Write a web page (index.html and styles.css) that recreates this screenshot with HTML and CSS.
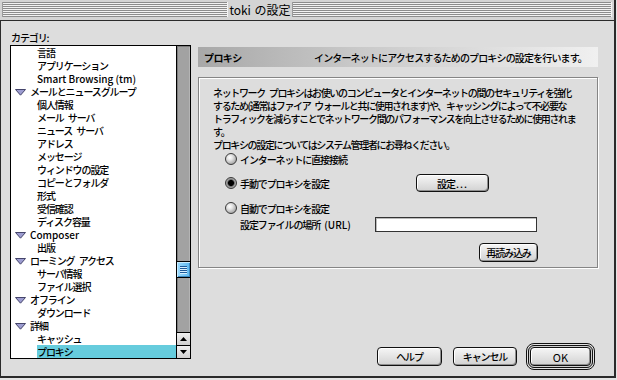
FILE: index.html
```html
<!DOCTYPE html>
<html lang="ja">
<head>
<meta charset="utf-8">
<title>toki の設定</title>
<link rel="stylesheet" href="styles.css">
</head>
<body>
<div class="window">
  <div class="titlebar">
    <div class="stripes stripes-left"></div>
    <div class="title">toki の設定</div>
    <div class="stripes stripes-right"></div>
  </div>
  <div class="content">
    <div class="left">
      <div class="cat-label">カテゴリ:</div>
      <div class="listbox">
        <ul class="list">
          <li class="child">言語</li>
          <li class="child">アプリケーション</li>
          <li class="child lat">Smart Browsing (tm)</li>
          <li class="parent"><svg class="tri" width="11" height="7" viewBox="0 0 11 7"><polygon points="0.5,0.5 10.5,0.5 5.5,6.2" fill="#9c9cd0" stroke="#44446a" stroke-width="1"/></svg>メールとニュースグループ</li>
          <li class="child">個人情報</li>
          <li class="child">メール サーバ</li>
          <li class="child">ニュース サーバ</li>
          <li class="child">アドレス</li>
          <li class="child">メッセージ</li>
          <li class="child">ウィンドウの設定</li>
          <li class="child">コピーとフォルダ</li>
          <li class="child">形式</li>
          <li class="child">受信確認</li>
          <li class="child">ディスク容量</li>
          <li class="parent lat"><svg class="tri" width="11" height="7" viewBox="0 0 11 7"><polygon points="0.5,0.5 10.5,0.5 5.5,6.2" fill="#9c9cd0" stroke="#44446a" stroke-width="1"/></svg>Composer</li>
          <li class="child">出版</li>
          <li class="parent"><svg class="tri" width="11" height="7" viewBox="0 0 11 7"><polygon points="0.5,0.5 10.5,0.5 5.5,6.2" fill="#9c9cd0" stroke="#44446a" stroke-width="1"/></svg>ローミング アクセス</li>
          <li class="child">サーバ情報</li>
          <li class="child">ファイル選択</li>
          <li class="parent"><svg class="tri" width="11" height="7" viewBox="0 0 11 7"><polygon points="0.5,0.5 10.5,0.5 5.5,6.2" fill="#9c9cd0" stroke="#44446a" stroke-width="1"/></svg>オフライン</li>
          <li class="child">ダウンロード</li>
          <li class="parent"><svg class="tri" width="11" height="7" viewBox="0 0 11 7"><polygon points="0.5,0.5 10.5,0.5 5.5,6.2" fill="#9c9cd0" stroke="#44446a" stroke-width="1"/></svg>詳細</li>
          <li class="child">キャッシュ</li>
          <li class="child selected">プロキシ</li>
        </ul>
        <div class="scrollbar">
          <div class="track"><div class="thumb"><div class="grip"></div></div></div>
          <div class="arrow"><svg width="7" height="4" viewBox="0 0 7 4"><polygon points="3.5,0 7,4 0,4" fill="#000"/></svg></div>
          <div class="arrow"><svg width="7" height="4" viewBox="0 0 7 4"><polygon points="0,0 7,0 3.5,4" fill="#000"/></svg></div>
        </div>
      </div>
    </div>
    <div class="right">
      <div class="panel-head">
        <span class="ph-title">プロキシ</span>
        <span class="ph-desc">インターネットにアクセスするためのプロキシの設定を行います。</span>
      </div>
      <div class="group">
        <p class="desc">ネットワーク プロキシはお使いのコンピュータとインターネットの間のセキュリティを強化<br>するため(通常はファイア ウォールと共に使用されます)や、キャッシングによって不必要な<br>トラフィックを減らすことでネットワーク間のパフォーマンスを向上させるために使用されま<br>す。<br>プロキシの設定についてはシステム管理者にお尋ねください。</p>
        <div class="opt opt1"><span class="radio"></span><span class="opt-label">インターネットに直接接続</span></div>
        <div class="opt opt2"><span class="radio checked"></span><span class="opt-label">手動でプロキシを設定</span><span class="btn btn-settings">設定<span class="lat dots">...</span></span></div>
        <div class="opt opt3"><span class="radio"></span><span class="opt-label">自動でプロキシを設定</span></div>
        <div class="url-row"><span class="url-label">設定ファイルの場所 <span class="lat">(URL)</span></span><span class="field"></span></div>
        <div class="reload-row"><span class="btn btn-reload">再読み込み</span></div>
      </div>
      <div class="buttons">
        <span class="btn btn-help">ヘルプ</span>
        <span class="btn btn-cancel">キャンセル</span>
        <span class="ring"><span class="ring-in"><span class="btn btn-ok lat">OK</span></span></span>
      </div>
    </div>
  </div>
</div>
</body>
</html>
```

FILE: styles.css
```css
* { box-sizing: border-box; }

html, body {
  margin: 0;
  padding: 0;
}

body {
  width: 617px;
  height: 380px;
  overflow: hidden;
  background: #e4e4e4;
  font-family: "Noto Sans CJK JP", "Noto Sans", sans-serif;
  font-size: 10px;
  font-weight: 500;
  letter-spacing: -1.1px;
  word-spacing: 3px;
  color: #000;
}

.lat { letter-spacing: 0; word-spacing: normal; }

.dots { letter-spacing: 1px; margin-left: 1px; }

.window {
  width: 616px;
  height: 378px;
  display: flex;
  flex-direction: column;
  background: #d6d6d6;
  border-right: 2px solid #2a2a2a;
  border-bottom: 2px solid #2a2a2a;
}

/* title bar */
.titlebar {
  height: 20px;
  flex: none;
  display: flex;
  padding: 2px 2px 3px 2px;
  background: #d4d4d4;
}

.stripes {
  height: 15px;
  background: repeating-linear-gradient(to bottom, #8c8c8c 0 1px, #f2f2f2 1px 2px);
  border-left: 1px solid #9a9a9a;
  border-right: 1px solid #f4f4f4;
}

.stripes-left { width: 226px; }
.stripes-right { flex: 1; }

.title {
  width: 64px;
  height: 15px;
  text-align: center;
  font-size: 12px;
  font-weight: 400;
  line-height: 15px;
  letter-spacing: 0;
  word-spacing: 1px;
  white-space: nowrap;
}

/* content */
.content {
  flex: 1;
  display: flex;
  gap: 7px;
  padding: 10px 16px 7px 9px;
  background: #dddddd;
  border-top: 1px solid #2a2a2a;
  border-left: 1px solid #2a2a2a;
}

.left {
  width: 181px;
  flex: none;
  display: flex;
  flex-direction: column;
}

.cat-label {
  height: 14px;
  line-height: 14px;
  padding-left: 1px;
}

.listbox {
  height: 314px;
  display: flex;
  border: 1px solid #000;
  background: #fff;
}

.list {
  list-style: none;
  margin: 0;
  padding: 0;
  flex: 1;
}

.list li {
  height: 13px;
  line-height: 13px;
  white-space: nowrap;
  display: flex;
  align-items: center;
}

.list li.child { padding-left: 26px; }

.list li.parent { padding-left: 4px; }

.tri {
  flex: none;
  margin-right: 4px;
  margin-top: 1px;
}

.list li.selected {
  margin-left: 26px;
  padding-left: 0;
  background: #66ccdd;
}

.scrollbar {
  width: 14px;
  flex: none;
  display: flex;
  flex-direction: column;
  border-left: 1px solid #000;
}

.track {
  flex: 1;
  background: #a2a2a2;
  box-shadow: inset 1px 1px #7c7c7c, inset -1px 0 #b4b4b4;
}

.thumb {
  margin-top: 215px;
  height: 17px;
  border-top: 1px solid #000;
  border-bottom: 1px solid #000;
  background: linear-gradient(to right, #9fdcff, #5cb8f0);
  box-shadow: inset 1px 1px #c8ecff, inset -1px -1px #3a88c0;
  display: flex;
  align-items: center;
  justify-content: center;
}

.grip {
  width: 7px;
  height: 8px;
  background: repeating-linear-gradient(to bottom, #1d5a9a 0 1px, #d6f0ff 1px 2px);
}

.arrow {
  height: 13px;
  flex: none;
  border-top: 1px solid #000;
  background: linear-gradient(#f0f0f0, #cfcfcf);
  display: flex;
  align-items: center;
  justify-content: center;
}

/* right column */
.right {
  width: 400px;
  flex: none;
  display: flex;
  flex-direction: column;
  padding-top: 16px;
}

.panel-head {
  height: 20px;
  flex: none;
  display: flex;
  align-items: center;
  padding-left: 6px;
  white-space: nowrap;
  background: linear-gradient(to right, #a8a8a8 0%, #c9c9c9 40%, #f0f0f0 100%);
}

.ph-title {
  width: 110px;
  flex: none;
  font-weight: bold;
  letter-spacing: -0.6px;
}

.ph-desc { letter-spacing: -0.85px; }

.group {
  margin-top: 10px;
  height: 191px;
  border: 1px solid #858585;
  box-shadow: inset 1px 1px #ffffff, 1px 1px #ffffff;
  padding-top: 8px;
}

.desc {
  margin: 0;
  padding-left: 14px;
  line-height: 13px;
  letter-spacing: -1.35px;
  white-space: nowrap;
}

.opt {
  display: flex;
  align-items: center;
  padding-left: 26px;
}

.opt1 { height: 16px; }
.opt2 { height: 18px; margin-top: 7px; }
.opt3 { height: 16px; margin-top: 8px; }

.opt-label {
  margin-left: 3px;
  white-space: nowrap;
}

.opt2 .opt-label { width: 176px; flex: none; }

.radio {
  width: 12px;
  height: 12px;
  flex: none;
  border-radius: 50%;
  border: 1px solid #3a3a3a;
  background: radial-gradient(circle at 38% 35%, #ffffff 0, #e4e4e4 30%, #a8a8a8 75%, #8a8a8a 100%);
}

.radio.checked {
  background: radial-gradient(circle at 50% 50%, #000 0 2.6px, #555 3.2px, #9a9a9a 4px, #c8c8c8 100%);
}

.btn {
  display: flex;
  align-items: center;
  justify-content: center;
  height: 19px;
  flex: none;
  border: 1px solid #111;
  border-radius: 4px;
  background: linear-gradient(#f6f6f6, #d2d2d2);
  box-shadow: inset 1px 1px #ffffff, inset -1px -1px #8e8e8e;
  white-space: nowrap;
}

.btn-settings {
  width: 73px;
  height: 18px;
}

.url-row {
  display: flex;
  align-items: center;
  height: 16px;
  padding-left: 41px;
}

.url-label { width: 135px; flex: none; white-space: nowrap; }

.field {
  width: 162px;
  height: 15px;
  flex: none;
  border: 1px solid #333;
  background: #fff;
  box-shadow: inset 1px 1px #bbb;
}

.reload-row {
  display: flex;
  justify-content: flex-end;
  padding-right: 59px;
  margin-top: 11px;
}

.btn-reload { width: 59px; }

.buttons {
  margin-top: auto;
  height: 25px;
  display: flex;
  align-items: center;
  justify-content: flex-end;
  padding-right: 3px;
}

.btn-help { width: 65px; }

.btn-cancel { width: 64px; margin-left: 11px; }

.ring {
  margin-left: 9px;
  display: flex;
  padding: 1px;
  border: 1px solid #111;
  border-radius: 8px;
  background: #e2e2e2;
}

.ring-in {
  display: flex;
  padding: 1px;
  border: 1px solid #111;
  border-radius: 6px;
  background: #cfcfcf;
}

.btn-ok { width: 61px; font-size: 11px; font-weight: 400; }
```
